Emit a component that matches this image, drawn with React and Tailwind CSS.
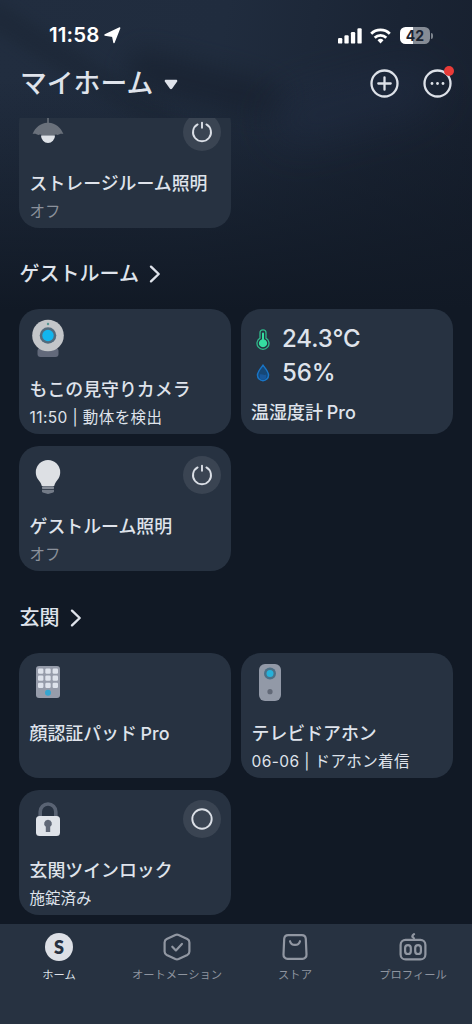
import React from 'react'

const ROOMS = [
    {
        id: 'guest',
        name: 'ゲストルーム',
        devices: [
            { id: 'camera', name: 'もこの見守りカメラ', status: '11:50 | 動体を検出', timed: true, icon: CameraIcon },
            { id: 'meter', name: '温湿度計 Pro', type: 'meter', temperature: '24.3°C', humidity: '56%' },
            { id: 'guest-light', name: 'ゲストルーム照明', status: 'オフ', off: true, icon: BulbIcon, action: 'power' },
        ],
    },
    {
        id: 'entrance',
        name: '玄関',
        devices: [
            { id: 'pad', name: '顔認証パッド Pro', icon: KeypadIcon },
            { id: 'doorbell', name: 'テレビドアホン', status: '06-06 | ドアホン着信', timed: true, icon: DoorbellIcon },
            { id: 'lock', name: '玄関ツインロック', status: '施錠済み', icon: LockIcon, action: 'lock' },
        ],
    },
]

const STORAGE_LIGHT = { id: 'storage-light', name: 'ストレージルーム照明', status: 'オフ', off: true, icon: LampIcon, action: 'power' }

const TABS = [
    { id: 'home', label: 'ホーム', icon: HomeTabIcon, active: true },
    { id: 'automation', label: 'オートメーション', icon: AutomationTabIcon },
    { id: 'store', label: 'ストア', icon: StoreTabIcon },
    { id: 'profile', label: 'プロフィール', icon: ProfileTabIcon },
]

/* Device icons, all on a 38x40 box */

function LampIcon() {
    return (
        <svg width="38" height="40" viewBox="0 0 38 40">
            <path d="M18.200 2h1.600v7.700c6.400.5 12.200 4.600 14.600 11.300-2.700-.8-4 .2-5.600.9-1.700-.9-3-.6-4.200.9H13.400c-1.200-1.500-2.500-1.800-4.200-.9-1.600-.7-2.900-1.700-5.600-.9C6 14.300 11.800 10.200 18.200 9.700z" fill="#6a717b" />
            <path d="M12 22.500h14a7 7.500 0 0 1-14 0z" fill="#dfe3e8" />
        </svg>
    )
}

function CameraIcon() {
    return (
        <svg width="38" height="40" viewBox="0 0 38 40">
            <rect x="8.500" y="29" width="21" height="9" rx="3" fill="#62697a" />
            <circle cx="19" cy="16.500" r="15.800" fill="#c3c6c9" />
            <circle cx="19" cy="16.500" r="8.300" fill="#526b7d" />
            <circle cx="19" cy="16.500" r="5.700" fill="#12b6ee" />
            <circle cx="19" cy="5" r="1.200" fill="#579693" />
        </svg>
    )
}

function BulbIcon() {
    return (
        <svg width="38" height="40" viewBox="0 0 38 40">
            <path d="M19 4a12.200 12.200 0 0 1 12.200 12.200c0 5-2.600 7.400-4.400 10-.8 1.200-1.200 2.500-1.600 3.800H12.800c-.4-1.300-.8-2.600-1.600-3.800-1.800-2.600-4.400-5-4.400-10A12.200 12.200 0 0 1 19 4z" fill="#dde0e4" />
            <rect x="13" y="30.300" width="12" height="2.800" rx="1.200" fill="#868d98" />
            <path d="M13 33.700h12v1.500c0 1-.6 1.300-1.500 1.500L19 38l-4.500-1.300c-.9-.2-1.500-.5-1.500-1.500z" fill="#737b87" />
        </svg>
    )
}

function KeypadIcon() {
    const keys = [0, 1, 2, 3, 4, 5, 6, 7, 8]
    return (
        <svg width="38" height="40" viewBox="0 0 38 40">
            <rect x="7" y="3" width="24" height="32" rx="3" fill="#969caa" />
            {keys.map((k) => (
                <rect key={k} x={9 + (k % 3) * 7.3} y={5.500 + Math.floor(k / 3) * 7.1} width="5.400" height="5.200" rx="1.200" fill="#dee3ec" />
            ))}
            <circle cx="19" cy="29.700" r="3" fill="#35a5cf" />
        </svg>
    )
}

function DoorbellIcon() {
    return (
        <svg width="38" height="40" viewBox="0 0 38 40">
            <rect x="8" y="1" width="22" height="37" rx="6" fill="#9299a7" />
            <circle cx="19" cy="10.600" r="6" fill="#4c7086" />
            <circle cx="19" cy="10.600" r="3.500" fill="#27b1d9" />
            <circle cx="19" cy="28.700" r="2.600" fill="#626977" />
        </svg>
    )
}

function LockIcon() {
    return (
        <svg width="38" height="40" viewBox="0 0 38 40">
            <path d="M11.200 18v-6.200a7.800 7.800 0 0 1 15.600 0V18" fill="none" stroke="#596373" strokeWidth="3.600" />
            <rect x="7" y="16" width="24" height="20" rx="3.500" fill="#dfe3e9" />
            <path d="M19 19.700a3.900 3.900 0 0 1 2.200 7.100V32h-4.400v-5.200A3.900 3.900 0 0 1 19 19.700z" fill="#606877" />
        </svg>
    )
}

function ThermometerIcon() {
    return (
        <svg width="14" height="21" viewBox="0 0 14 21">
            <path d="M4 3.800a3 3 0 0 1 6 0v5.300a6 6 0 1 1-6 0z" fill="none" stroke="#2fb98a" strokeWidth="1.300" />
            <path d="M6 4.500a1 1 0 0 1 2 0v5.700a4.100 4.100 0 1 1-2 0z" fill="#35dda0" />
        </svg>
    )
}

function DropIcon() {
    return (
        <svg width="14" height="18" viewBox="0 0 14 18">
            <path d="M7 1.300c2.200 2.900 5.500 6.200 5.500 9.900a5.500 5.500 0 0 1-11 0C1.500 7.500 4.800 4.200 7 1.300z" fill="#164776" stroke="#1975c6" strokeWidth="1.500" />
            <path d="M3.700 10.500c2-.9 4.500 1.300 6.600-.1v2a3.300 3.300 0 0 1-6.600 0z" fill="#18579a" />
        </svg>
    )
}

/* Tab bar icons */

function HomeTabIcon() {
    return (
        <span className="flex h-7 w-7 items-center justify-center rounded-full bg-[#dde0e6] font-['Lato'] text-[18px] leading-none font-extrabold text-[#273140]">
            S
        </span>
    )
}

function AutomationTabIcon() {
    return (
        <svg width="28" height="28" viewBox="0 0 28 28" fill="none" stroke="#9197a2" strokeWidth="2.200" strokeLinecap="round" strokeLinejoin="round">
            <path d="M12.400 1.900a4 4 0 0 1 3.200 0l8.700 4.100a3.800 3.800 0 0 1 2.100 3.400v9.200a3.800 3.800 0 0 1-2.100 3.400l-8.700 4.100a4 4 0 0 1-3.200 0L3.700 22a3.800 3.800 0 0 1-2.100-3.400V9.400A3.800 3.800 0 0 1 3.700 6z" />
            <path d="M9.300 13.700l3.600 3.700 6-6.500" />
        </svg>
    )
}

function StoreTabIcon() {
    return (
        <svg width="28" height="28" viewBox="0 0 28 28" fill="none" stroke="#9197a2" strokeWidth="2.200" strokeLinecap="round">
            <path d="M7.200 2.200h13.600a4 4 0 0 1 4 3.700l.7 15.600a4 4 0 0 1-4 4.300h-15a4 4 0 0 1-4-4.300l.7-15.600a4 4 0 0 1 4-3.700z" />
            <path d="M9 8.200a5.200 5.200 0 0 0 10 0" />
        </svg>
    )
}

function ProfileTabIcon() {
    return (
        <svg width="28" height="28" viewBox="0 0 28 28" fill="none" stroke="#9197a2" strokeWidth="2.200" strokeLinecap="round">
            <path d="M15 1.200c-2 1.400-2.200 2.700-.6 3.400.5.300.6.800.6 1.600" />
            <rect x="1.600" y="6.900" width="24.800" height="19.500" rx="5" />
            <rect x="6.100" y="12.200" width="5.700" height="8.800" rx="2.850" />
            <rect x="16.200" y="12.200" width="5.700" height="8.800" rx="2.850" />
        </svg>
    )
}

function StatusBar() {
    return (
        <div className="flex h-[23px] items-center justify-between pr-[39px] pl-[49px]">
            <div className="flex items-center gap-[5px] text-[20.500px] font-semibold tracking-[0.100px] text-white">
                11:58
                <svg width="17" height="17" viewBox="0 0 17 17" fill="#fff" stroke="#fff" strokeWidth="1.400" strokeLinejoin="round">
                    <path d="M15.700 1L10 15.600 8.700 9.300 1 8z" />
                </svg>
            </div>
            <div className="flex items-center">
                <svg width="24" height="16" viewBox="0 0 24 16" fill="#fff">
                    <rect x="0" y="10" width="4.300" height="5.600" rx="1.200" />
                    <rect x="6.400" y="7.300" width="4.300" height="8.300" rx="1.200" />
                    <rect x="12.900" y="4" width="4.300" height="11.600" rx="1.200" />
                    <rect x="19.400" y=".3" width="4.300" height="15.300" rx="1.200" />
                </svg>
                <svg className="ml-2" width="21" height="16" viewBox="0 0 21 16" fill="none" stroke="#fff" strokeWidth="2.800">
                    <path d="M1.200 5.700a13.300 13.300 0 0 1 18.600 0" />
                    <path d="M4.700 9.700a8.300 8.300 0 0 1 11.600 0" />
                    <path d="M10.500 15.500l-3-3.200a4.300 4.300 0 0 1 6 0z" fill="#fff" stroke="none" />
                </svg>
                <div className="ml-[9px] flex h-[17px] w-[30px] items-center justify-center rounded-[5.500px] bg-linear-to-r from-white from-[42%] to-[#868c96] to-[42%] text-[14px] leading-none font-bold text-[#1b2431]">
                    42
                </div>
                <div className="ml-px h-[6px] w-[2px] rounded-r-full bg-[#7d838d]" />
            </div>
        </div>
    )
}

function Header() {
    return (
        <header className="h-[118px] shrink-0 pt-6">
            <StatusBar />
            <div className="mt-[18px] flex h-9 items-center justify-between px-5">
                <h1 className="flex items-center pt-px text-[26.800px] font-medium">
                    マイホーム
                    <svg className="mt-[2px] ml-[11px]" width="14" height="11" viewBox="0 0 14 11" fill="#dfe3eb">
                        <path d="M2 .8h10c1.200 0 1.700 1.100 1 2L8.200 9.500a1.500 1.500 0 0 1-2.400 0L1 2.800c-.7-.9-.2-2 1-2z" />
                    </svg>
                </h1>
                <div className="flex items-center gap-[24px]">
                    <button aria-label="追加">
                        <svg width="29" height="29" viewBox="0 0 29 29" fill="none" stroke="#dde1e8" strokeWidth="2.300" strokeLinecap="round">
                            <circle cx="14.500" cy="14.500" r="13" />
                            <path d="M14.500 8.300v12.400M8.300 14.500h12.400" />
                        </svg>
                    </button>
                    <button className="relative" aria-label="メニュー">
                        <svg width="29" height="29" viewBox="0 0 29 29">
                            <circle cx="14.500" cy="14.500" r="13" fill="none" stroke="#dde1e8" strokeWidth="2.300" />
                            <circle cx="9" cy="14.500" r="1.400" fill="#dde1e8" />
                            <circle cx="14.500" cy="14.500" r="1.400" fill="#dde1e8" />
                            <circle cx="20" cy="14.500" r="1.400" fill="#dde1e8" />
                        </svg>
                        <span className="absolute -top-[3px] -right-[2px] h-[10px] w-[10px] rounded-full bg-[#e93b38]" />
                    </button>
                </div>
            </div>
        </header>
    )
}

function ActionButton({ action }) {
    return (
        <button className="flex h-[38px] w-[38px] items-center justify-center rounded-full bg-[#3a4452]">
            <svg width="22" height="22" viewBox="0 0 22 22" fill="none" stroke="#dbdfe6" strokeWidth="1.900" strokeLinecap="round">
                {action === 'power' ? (
                    <path d="M11 1.600v5.200M6.600 3.400a9 9 0 1 0 8.800 0" />
                ) : (
                    <circle cx="11" cy="11" r="9.700" />
                )}
            </svg>
        </button>
    )
}

function MeterCard({ device }) {
    return (
        <div className="h-[125px] rounded-[20px] bg-[#273241] pt-[13px] pl-[10px]">
            <div className="flex h-[34px] items-center gap-[12px] pl-[5px] text-[24px] font-medium tracking-[-0.100px]">
                <ThermometerIcon />
                {device.temperature}
            </div>
            <div className="flex h-[34px] items-center gap-[12px] pl-[5px] text-[24px] font-medium tracking-[-0.100px]">
                <DropIcon />
                {device.humidity}
            </div>
            <div className="mt-[10px] text-[18px] leading-[26px] font-medium [word-spacing:-1px]">{device.name}</div>
        </div>
    )
}

function DeviceCard({ device }) {
    if (device.type === 'meter') return <MeterCard device={device} />

    const Icon = device.icon
    return (
        <div className="h-[125px] rounded-[20px] bg-[#273241] px-[10px] pt-[10px]">
            <div className="flex h-10 items-start justify-between">
                <Icon />
                {device.action && <ActionButton action={device.action} />}
            </div>
            <div className="mt-[18px] pl-[0.500px] text-[17.900px] leading-[26px] font-medium whitespace-nowrap [word-spacing:-1px]">{device.name}</div>
            {device.status && (
                <div className={`mt-1 pl-[0.500px] text-[15.500px] leading-[22px] whitespace-nowrap ${device.timed ? 'tracking-[0.400px]' : ''} ${device.off ? 'text-[#8b919b]' : ''}`}>
                    {device.status}
                </div>
            )}
        </div>
    )
}

function RoomSection({ room }) {
    return (
        <section>
            <h2 className="flex h-[81px] items-center pt-[10px] pl-[0.500px] text-[20px] font-medium">
                {room.name}
                <svg className="ml-[10px]" width="12" height="18" viewBox="0 0 12 18" fill="none" stroke="#dfe3eb" strokeWidth="2.400" strokeLinecap="round" strokeLinejoin="round">
                    <path d="M2 1.700L9.700 9 2 16.300" />
                </svg>
            </h2>
            <div className="grid grid-cols-2 gap-x-[10px] gap-y-[12px]">
                {room.devices.map((d) => (
                    <DeviceCard key={d.id} device={d} />
                ))}
            </div>
        </section>
    )
}

function TabBar() {
    return (
        <nav className="grid h-[100px] shrink-0 grid-cols-4 bg-[#273241] pt-[9px]">
            {TABS.map(({ id, label, icon: Icon, active }) => (
                <button key={id} className="flex flex-col items-center">
                    <Icon />
                    <span className={`mt-[6px] text-[11.300px] leading-4 whitespace-nowrap ${active ? 'text-[#dde1e8]' : 'text-[#8e949f]'}`}>{label}</span>
                </button>
            ))}
        </nav>
    )
}

/* Soft leaf shadows behind the header */
function Backdrop() {
    return (
        <div className="pointer-events-none absolute inset-x-0 top-0 -z-10 h-[320px] overflow-hidden">
            <div className="absolute -top-[4px] -left-[20px] h-[20px] w-[230px] origin-left rotate-[32deg] rounded-full bg-[#172130]/50 blur-[9px]" />
            <div className="absolute top-[66px] left-[125px] h-[36px] w-[160px] rotate-[14deg] rounded-full bg-[#151e2b]/60 blur-[13px]" />
            <div className="absolute top-[80px] left-[270px] h-[50px] w-[170px] -rotate-[15deg] rounded-full bg-[#223048]/40 blur-[20px]" />
        </div>
    )
}

export default function App() {
    return (
        <div className="relative isolate flex h-[1024px] w-[472px] flex-col overflow-hidden bg-[#111925] bg-[linear-gradient(180deg,transparent_0px,transparent_80px,#111925_310px),linear-gradient(100deg,#212d3f_0%,#202c3e_35%,#1a2434_62%,#141b28_100%)] font-['Inter','Noto_Sans_CJK_JP',sans-serif] text-[#dfe3eb]">
            <Backdrop />
            <Header />
            <main className="min-h-0 flex-1 overflow-hidden px-[19px]">
                <div className="-mt-[15px]">
                    <div className="grid grid-cols-2 gap-x-[10px]">
                        <DeviceCard device={STORAGE_LIGHT} />
                    </div>
                    <div className="flex flex-col gap-px">
                        {ROOMS.map((room) => (
                            <RoomSection key={room.id} room={room} />
                        ))}
                    </div>
                </div>
            </main>
            <TabBar />
        </div>
    )
}
